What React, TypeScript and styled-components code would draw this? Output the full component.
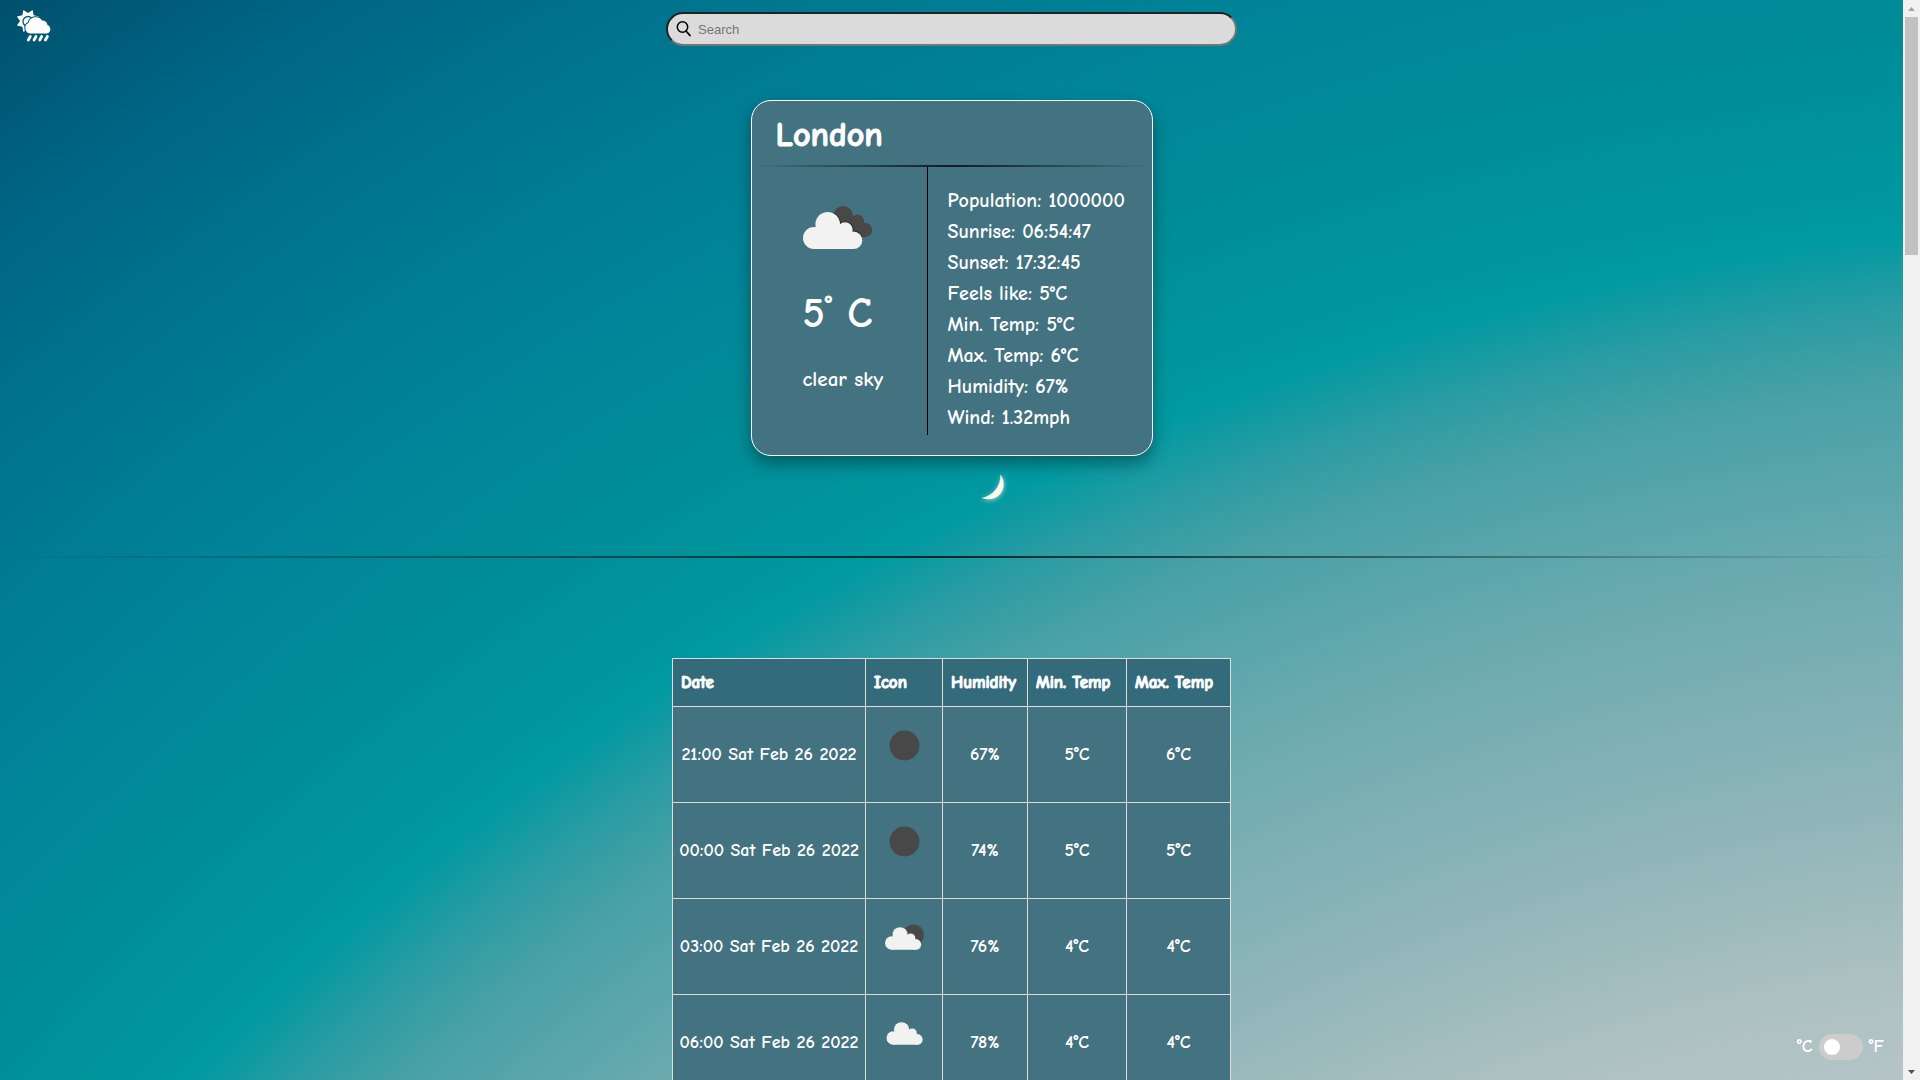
import React, { useState } from "react";
import styled, { createGlobalStyle } from "styled-components";

const comic = `"Comic Sans MS", "Comic Neue", "Open Sans", "Noto Sans", cursive`;

const GlobalStyle = createGlobalStyle`
  *, *::before, *::after { box-sizing: border-box; }
  html, body { margin: 0; }
  body { color: #fff; font-family: ${comic}; font-size: 18px; font-weight: 700; }
`;

const Window = styled.div`
  display: grid;
  grid-template-columns: minmax(0, 1fr) 17px;
  height: 100vh;
  overflow: hidden;
`;

const Page = styled.div`
  height: 100vh;
  overflow-y: auto;
  scrollbar-width: none;
  background: radial-gradient(
    circle farthest-corner at 117% 281%,
    #b8c5c8 52%,
    #aec1c2 55%,
    #8fb5b9 60%,
    #6dabb0 66%,
    #48a1a6 71%,
    #2a9ca3 73%,
    #0099a1 75%,
    #008c97 80%,
    #008499 84%,
    #007892 89%,
    #006685 95%,
    #00506c 100%
  );
`;

const Header = styled.header`
  display: grid;
  grid-template-columns: 1fr 30% 1fr;
  align-items: center;
  height: 58px;
`;

const HomeLink = styled.a`
  display: inline-flex;
  padding-left: 16px;
  justify-self: start;
`;

const SearchBox = styled.label`
  display: flex;
  align-items: center;
  gap: 6px;
  height: 34px;
  padding: 0 8px;
  background: #dbdbdb;
  border: 2px solid;
  border-color: #212121 #767676 #767676 #212121;
  border-radius: 17px;
`;

const SearchInput = styled.input`
  flex: 1;
  min-width: 0;
  padding: 0;
  border: 0;
  outline: 0;
  background: transparent;
  color: #000;
  font: 13px "Liberation Sans", Arial, sans-serif;
  &::placeholder { color: #757575; }
`;

const Main = styled.main`
  display: flex;
  flex-direction: column;
  align-items: center;
  padding-top: 42px;
`;

const Card = styled.section`
  width: 402px;
  padding-bottom: 20px;
  background: #437280;
  border: 1px solid #fff;
  border-radius: 20px;
  box-shadow: 0 8px 16px rgba(0, 0, 0, 0.35);
`;

const City = styled.h1`
  margin: 0;
  padding: 4px 24px 0;
  font-size: 34px;
  line-height: 60px;
  -webkit-text-stroke: 1px #fff;
`;

const Rule = styled.hr`
  width: 100%;
  height: 2px;
  margin: 0;
  border: 0;
  background: linear-gradient(to right, transparent, rgba(0, 0, 0, 0.75), transparent);
`;

const CardBody = styled.div`
  display: grid;
  grid-template-columns: 175px 1fr;
`;

const Summary = styled.div`
  padding: 39px 0 0 51px;
  svg { display: block; }
`;

const Temperature = styled.p`
  margin: 32px 0 14px;
  font-size: 42px;
  line-height: 66px;
  sup {
    font-size: 28px;
    line-height: 0;
    vertical-align: 12px;
  }
`;

const Description = styled.p`
  margin: 0;
  font-size: 21px;
  line-height: 36px;
`;

const Details = styled.ul`
  margin: 0;
  padding: 18px 0 2px 20px;
  border-left: 1px solid #000;
  list-style: none;
  font-size: 20px;
  line-height: 31px;
`;

const Sky = styled.div`
  display: flex;
  justify-content: center;
  height: 100px;
  padding: 12px 0 0 82px;
`;

const Forecast = styled.table`
  margin-top: 100px;
  border-collapse: collapse;
  background: #437280;
  th, td {
    padding: 0 8px;
    border: 1px solid #ddd;
    white-space: nowrap;
  }
  td:first-child { padding: 0; }
  th {
    height: 48px;
    background: #336b7b;
    text-align: left;
    font-size: 17px;
    -webkit-text-stroke: 1px #fff;
  }
  td {
    height: 96px;
    text-align: center;
  }
  svg { display: block; margin: 0 auto; }
`;

const Column = styled.col<{ $width: number }>`
  width: ${(p) => p.$width}px;
`;

const UnitSwitch = styled.label`
  position: fixed;
  right: 36px;
  bottom: 20px;
  display: flex;
  align-items: center;
  gap: 6px;
  line-height: 26px;
`;

const Toggle = styled.input`
  appearance: none;
  display: flex;
  align-items: center;
  width: 44px;
  height: 26px;
  margin: 0;
  padding: 0 5px;
  background: #ccc;
  border-radius: 13px;
  cursor: pointer;
  &::before {
    content: "";
    width: 16px;
    height: 16px;
    border-radius: 50%;
    background: #fff;
  }
  &:checked { justify-content: flex-end; }
`;

const ScrollTrack = styled.div`
  display: flex;
  flex-direction: column;
  justify-content: space-between;
  background: #f1f1f1;
`;

const ScrollTop = styled.div`
  display: flex;
  flex-direction: column;
`;

const ScrollThumb = styled.div`
  height: 22vh;
  margin: 0 2px;
  background: #c1c1c1;
`;

const Arrow = ({ down }: { down?: boolean }) => (
  <svg width="17" height="17" viewBox="0 0 17 17" aria-hidden="true">
    <path d={down ? "M5 7h7l-3.5 4z" : "M5 11h7L8.500 7z"} fill={down ? "#505050" : "#a3a3a3"} />
  </svg>
);

const star = Array.from({ length: 16 }, (_, i) => {
  const r = i % 2 ? 12 : 8;
  const a = (i * Math.PI) / 8;
  return `${12 + r * Math.cos(a)},${13 + r * Math.sin(a)}`;
}).join(" ");

const Logo = () => (
  <svg width="36" height="42" viewBox="0 0 36 42" aria-hidden="true">
    <polygon points={star} fill="#fff" />
    <circle cx="12" cy="13.500" r="5" fill="none" stroke="#00587a" strokeWidth="1.300" />
    <g fill="#fff" stroke="#00587a" strokeWidth="2" paintOrder="stroke">
      <path d="M15 25.500a5.500 5.500 0 0 1-2.500-10.500 7.500 7.500 0 0 1 13.500-2.500 5.500 5.500 0 0 1 5.500 4.500 4.500 4.500 0 0 1-.5 8.500z" />
    </g>
    <path
      stroke="#fff"
      strokeWidth="2.800"
      strokeLinecap="round"
      d="M14.300 28.500l-2 3.500M20 28.500l-2 3.500M25.700 28.500l-2 3.500M31.400 28.500l-2 3.500"
    />
  </svg>
);

const SearchIcon = () => (
  <svg width="16" height="18" viewBox="0 0 16 18" aria-hidden="true">
    <circle cx="6.500" cy="7" r="5.200" fill="none" stroke="#000" strokeWidth="1.500" />
    <path d="M10 11l4 4.500" stroke="#000" strokeWidth="1.800" strokeLinecap="round" />
  </svg>
);

const Cloud = () => (
  <g fill="#f2f2f0">
    <circle cx="11" cy="32" r="11" />
    <circle cx="24.700" cy="18.300" r="12.300" />
    <circle cx="42" cy="24" r="7.700" />
    <circle cx="50.600" cy="34.300" r="8.700" />
    <path d="M11 43V24l15-6 17 6 8 10v9z" />
  </g>
);

const BrokenClouds = () => (
  <svg width="70" height="43" viewBox="0 0 70 43" aria-hidden="true">
    <defs>
      <clipPath id="rear">
        <circle cx="40" cy="10" r="10" />
        <circle cx="54.500" cy="15" r="6.500" />
        <circle cx="62" cy="24" r="7.200" />
        <path d="M30 10l20 0 8 8 4 13H40z" />
      </clipPath>
    </defs>
    <g clipPath="url(#rear)">
      <path fill="#484849" d="M0 0h70v43H0z" />
      <g fill="#2b2c2e">
        <circle cx="24.700" cy="18.300" r="13.300" />
        <circle cx="42" cy="24" r="8.700" />
        <circle cx="50.600" cy="34.300" r="9.700" />
      </g>
    </g>
    <Cloud />
  </svg>
);

type SkyKind = "clear" | "few" | "cloud";

const RowIcon = ({ kind }: { kind: SkyKind }) => (
  <svg width="60" height="80" viewBox="0 0 60 80" role="img" aria-label={kind}>
    {kind === "clear" && <circle cx="30.500" cy="30.500" r="15" fill="#484849" />}
    {kind === "few" && <circle cx="39.500" cy="28" r="10.500" fill="#484849" />}
    {kind !== "clear" && (
      <g transform={kind === "few" ? "translate(11 16.500) scale(.61)" : "translate(12.500 15.500) scale(.61)"}>
        <Cloud />
      </g>
    )}
  </svg>
);

const Moon = () => (
  <svg width="40" height="40" viewBox="0 0 40 40" aria-hidden="true">
    <defs>
      <filter id="glow" x="-50%" y="-50%" width="200%" height="200%">
        <feGaussianBlur stdDeviation="2.500" />
      </filter>
    </defs>
    <path d="M28 6C36 18 28 37 8 31 20 29 29 20 28 6z" fill="#d5e6d8" opacity=".8" filter="url(#glow)" />
    <path d="M27.500 6.500C36 18 27 36 8.500 30 20 28 28 18 27.500 6.500z" fill="#fdf8ee" />
  </svg>
);

const details = [
  "Population: 1000000",
  "Sunrise: 06:54:47",
  "Sunset: 17:32:45",
  "Feels like: 5°C",
  "Min. Temp: 5°C",
  "Max. Temp: 6°C",
  "Humidity: 67%",
  "Wind: 1.32mph",
];

const columns = [
  { title: "Date", width: 193 },
  { title: "Icon", width: 77 },
  { title: "Humidity", width: 85 },
  { title: "Min. Temp", width: 99 },
  { title: "Max. Temp", width: 104 },
];

const rows: { date: string; kind: SkyKind; humidity: string; min: string; max: string }[] = [
  { date: "21:00 Sat Feb 26 2022", kind: "clear", humidity: "67%", min: "5°C", max: "6°C" },
  { date: "00:00 Sat Feb 26 2022", kind: "clear", humidity: "74%", min: "5°C", max: "5°C" },
  { date: "03:00 Sat Feb 26 2022", kind: "few", humidity: "76%", min: "4°C", max: "4°C" },
  { date: "06:00 Sat Feb 26 2022", kind: "cloud", humidity: "78%", min: "4°C", max: "4°C" },
];

export default function App() {
  const [query, setQuery] = useState("");
  const [fahrenheit, setFahrenheit] = useState(false);

  return (
    <Window>
      <GlobalStyle />
      <Page>
        <Header>
          <HomeLink href="#" aria-label="Weather home">
            <Logo />
          </HomeLink>
          <SearchBox>
            <SearchIcon />
            <SearchInput
              type="text"
              placeholder="Search"
              aria-label="Search"
              value={query}
              onChange={(e) => setQuery(e.target.value)}
            />
          </SearchBox>
        </Header>
        <Main>
          <Card>
            <City>London</City>
            <Rule />
            <CardBody>
              <Summary>
                <BrokenClouds />
                <Temperature>
                  5<sup>°</sup> C
                </Temperature>
                <Description>clear sky</Description>
              </Summary>
              <Details>
                {details.map((d) => (
                  <li key={d}>{d}</li>
                ))}
              </Details>
            </CardBody>
          </Card>
          <Sky>
            <Moon />
          </Sky>
          <Rule />
          <Forecast>
            <colgroup>
              {columns.map((c) => (
                <Column key={c.title} $width={c.width} />
              ))}
            </colgroup>
            <thead>
              <tr>
                {columns.map((c) => (
                  <th key={c.title} scope="col">{c.title}</th>
                ))}
              </tr>
            </thead>
            <tbody>
              {rows.map((r) => (
                <tr key={r.date}>
                  <td>{r.date}</td>
                  <td><RowIcon kind={r.kind} /></td>
                  <td>{r.humidity}</td>
                  <td>{r.min}</td>
                  <td>{r.max}</td>
                </tr>
              ))}
            </tbody>
          </Forecast>
        </Main>
        <UnitSwitch>
          <span>°C</span>
          <Toggle
            type="checkbox"
            role="switch"
            checked={fahrenheit}
            onChange={(e) => setFahrenheit(e.target.checked)}
          />
          <span>°F</span>
        </UnitSwitch>
      </Page>
      <ScrollTrack aria-hidden="true">
        <ScrollTop>
          <Arrow />
          <ScrollThumb />
        </ScrollTop>
        <Arrow down />
      </ScrollTrack>
    </Window>
  );
}
